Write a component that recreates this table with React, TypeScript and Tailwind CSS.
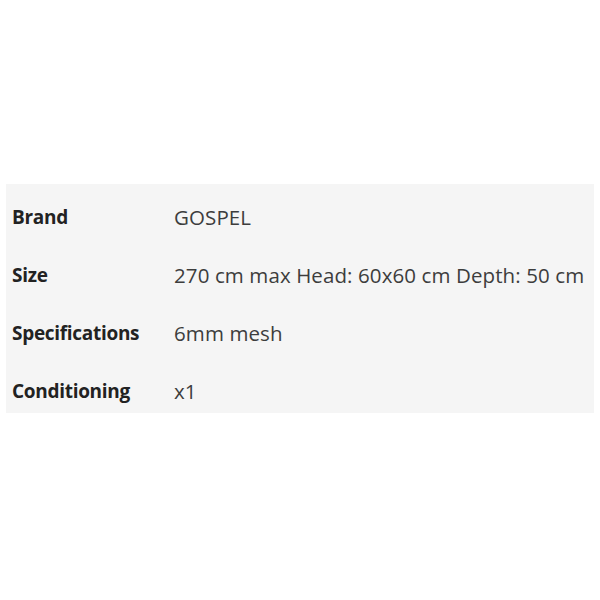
const rows = [
  { label: 'Brand', value: 'GOSPEL' },
  { label: 'Size', value: '270 cm max Head: 60x60 cm Depth: 50 cm' },
  { label: 'Specifications', value: '6mm mesh' },
  { label: 'Conditioning', value: 'x1' },
]

export default function App() {
  return (
    <div className="w-[600px] h-[600px] bg-white pt-[184px] px-[6px] font-['Open_Sans',sans-serif]">
      <div className="w-[588px] h-[229px] bg-[#f5f5f5] pt-[19px] pl-[6px] flex flex-col gap-[30px]">
        {rows.map((r) => (
          <div key={r.label} className="flex items-center h-[28px] leading-[28px]">
            <span className="w-[162px] text-[19px] font-bold text-[#222] tracking-[-0.3px]">{r.label}</span>
            <span className="text-[20.5px] text-[#3d3d3d] whitespace-nowrap tracking-[0.1px]">{r.value}</span>
          </div>
        ))}
      </div>
    </div>
  )
}
